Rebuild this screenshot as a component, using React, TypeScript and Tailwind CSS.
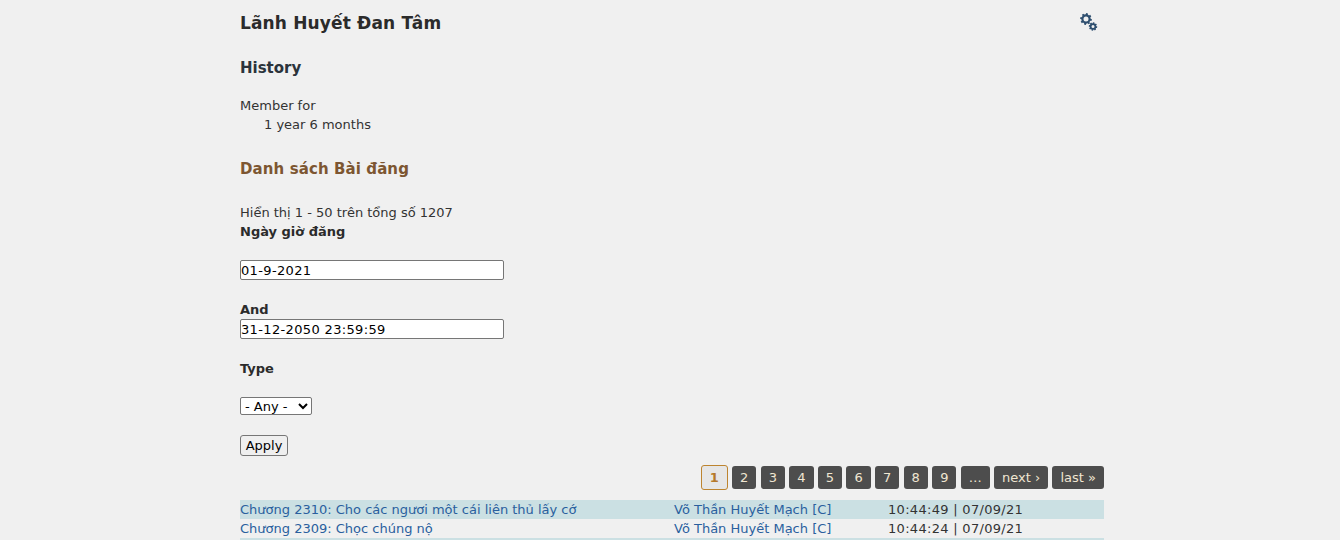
import React from "react";

const pages = ["2", "3", "4", "5", "6", "7", "8", "9", "…", "next ›", "last »"];

const rows = [
  { title: "Chương 2310: Cho các ngươi một cái liên thủ lấy cớ", time: "10:44:49 | 07/09/21" },
  { title: "Chương 2309: Chọc chúng nộ", time: "10:44:24 | 07/09/21" },
];

const Gear = ({ cx, cy, r, w }: { cx: number; cy: number; r: number; w: number }) => (
  <g fill="none" stroke="#2f4f6f">
    <circle cx={cx} cy={cy} r={r} strokeWidth={w} />
    {[0, 45, 90, 135].map((a) => (
      <line
        key={a}
        x1={cx - (r + w)}
        y1={cy}
        x2={cx + (r + w)}
        y2={cy}
        strokeWidth={w * 0.9}
        transform={`rotate(${a + 10} ${cx} ${cy})`}
        strokeDasharray={`${w} ${2 * r} ${w}`}
      />
    ))}
  </g>
);

const App = () => {
  return (
    <div className="h-[540px] overflow-hidden bg-[#f0f0f0] font-['DejaVu_Sans',Verdana,sans-serif] text-[13px] leading-[19px] text-[#333]">
      <div className="ml-[240px] w-[864px]">
        <div className="flex items-start justify-between pt-[11px]">
          <h1 className="text-[17px] leading-6 font-bold tracking-[0.15px] text-[#2b2b2b]">Lãnh Huyết Đan Tâm</h1>
          <svg width="20" height="20" viewBox="0 0 20 20" className="mt-px mr-[5px]">
            <Gear cx={7} cy={7} r={3.6} w={2.2} />
            <Gear cx={14} cy={14.5} r={2.4} w={1.8} />
          </svg>
        </div>

        <h2 className="mt-[23px] text-[15px] leading-[20px] font-bold text-[#2b333b]">History</h2>

        <div className="mt-[18px]">Member for</div>
        <div className="pl-6">1 year 6 months</div>

        <h2 className="mt-[25px] text-[15px] leading-[20px] font-bold tracking-[0.1px] text-[#7d5631]">Danh sách Bài đăng</h2>

        <div className="mt-[24px]">Hiển thị 1 - 50 trên tổng số 1207</div>
        <label className="block font-bold text-[#2b2b2b]">Ngày giờ đăng</label>

        <input
          readOnly
          value="01-9-2021"
          className="mt-[19px] block h-5 w-[264px] rounded-[2px] border border-[#767676] bg-white px-0 text-[13px] tracking-[0.35px] text-black outline-none"
        />

        <label className="mt-[20px] block font-bold text-[#2b2b2b]">And</label>
        <input
          readOnly
          value="31-12-2050 23:59:59"
          className="block h-5 w-[264px] rounded-[2px] border border-[#767676] bg-white px-0 text-[13px] tracking-[0.35px] text-black outline-none"
        />

        <label className="mt-[20px] block font-bold text-[#2b2b2b]">Type</label>

        <select
          defaultValue="any"
          className="mt-[19px] block h-[18px] w-[72px] appearance-auto rounded-[2px] border border-[#767676] bg-white text-[13px] leading-4 text-black outline-none"
        >
          <option value="any">- Any -</option>
        </select>

        <button className="mt-[20px] block h-[21px] w-[48px] rounded-[3px] border border-[#767676] bg-[#efefef] text-center text-[13px] leading-4 text-black">
          Apply
        </button>

        <div className="mt-[9px] flex justify-end gap-[4.3px]">
          <span className="flex h-[25px] w-[27px] items-center justify-center rounded-[3px] border border-[#bd842f] bg-[#e6e6e6] font-bold text-[#b5792a]">
            1
          </span>
          {pages.map((p) => (
            <span
              key={p}
              className="mt-px flex h-[23px] items-center justify-center rounded-[3px] bg-[#4d4d4d] px-[8px] text-[#f0e6d2]"
            >
              {p}
            </span>
          ))}
        </div>

        <div className="mt-[10px]">
          {rows.map((r, i) => (
            <div
              key={r.time}
              className={`grid h-[19px] grid-cols-[434px_214px_1fr] ${i === 0 ? "bg-[#cbe0e3]" : ""}`}
            >
              <a className="truncate text-[#2a5f9e]">{r.title}</a>
              <a className="text-[#2a5f9e]">Võ Thần Huyết Mạch [C]</a>
              <span className="tracking-[0.3px]">{r.time}</span>
            </div>
          ))}
          <div className="h-[19px] bg-[#cbe0e3]" />
        </div>
      </div>
    </div>
  );
};

export default App;
